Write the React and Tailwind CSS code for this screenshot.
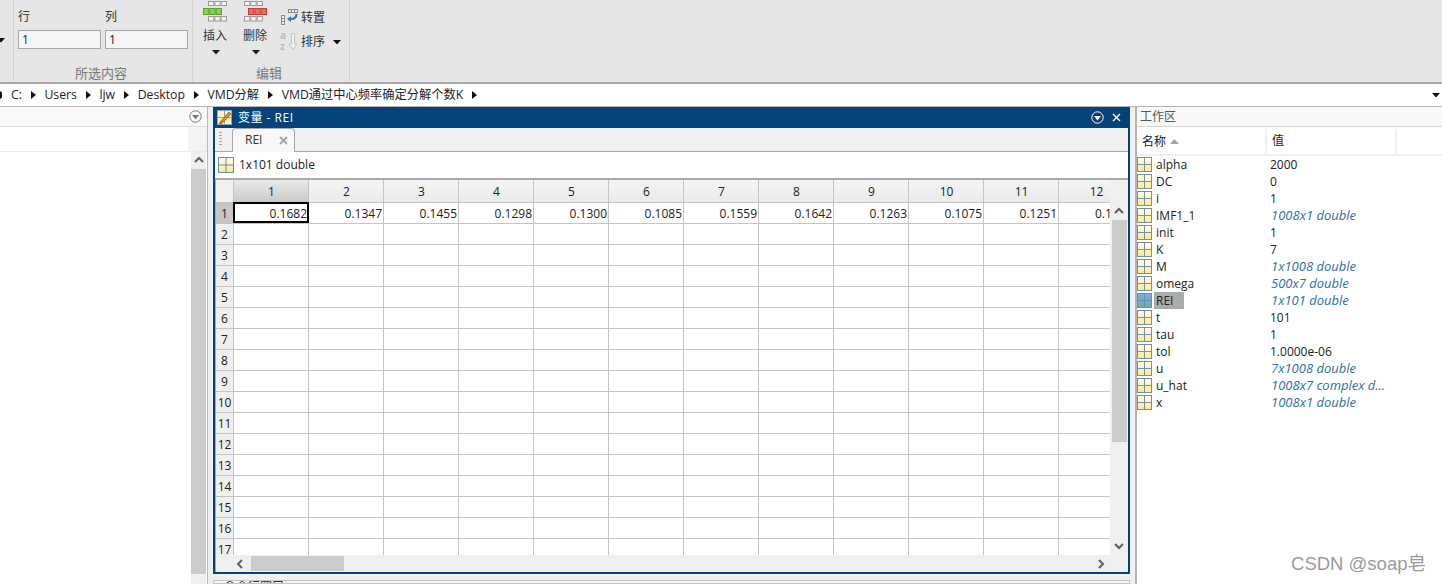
import React from "react";

const FONT = { fontFamily: '"Open Sans","Noto Sans CJK SC",sans-serif' };

function GridIcon({ blue, size = 15 }) {
  const id = blue ? "gb" : "gy";
  return (
    <svg width={size} height={size} viewBox="0 0 16 16" className="shrink-0">
      <defs>
        <linearGradient id={id} x1="0" y1="0" x2="0" y2="1">
          <stop offset="0" stopColor={blue ? "#6fb2e8" : "#fffef0"} />
          <stop offset="1" stopColor={blue ? "#6fa9a8" : "#fde98c"} />
        </linearGradient>
      </defs>
      <rect x="0.5" y="0.5" width="15" height="15" fill={`url(#${id})`} stroke="#6d8aa8" />
      <path d="M8 0.5V15.5M0.5 8H15.5" stroke="#6d8aa8" fill="none" />
    </svg>
  );
}

function Tri({ className = "" }) {
  return (
    <svg width="8" height="4.5" viewBox="0 0 9 5" className={`shrink-0 ${className}`}>
      <path d="M0 0H9L4.5 5Z" fill="#111" />
    </svg>
  );
}

function Crumb() {
  return (
    <svg width="5" height="8" viewBox="0 0 5 8" className="shrink-0">
      <path d="M0 0L5 4L0 8Z" fill="#111" />
    </svg>
  );
}

function Blocks({ color, stroke, outer, mid }) {
  const cells = [0, 1, 2];
  return (
    <svg width="28" height="23" viewBox="0 0 28 23">
      {cells.map((i) => <rect key={"a" + i} x={outer + i * 6.33 + 0.5} y="1.5" width="5.3" height="4" fill="#f4f4f4" stroke="#9a9a9a" />)}
      {cells.map((i) => <rect key={"m" + i} x={mid + i * 6.33 + 0.5} y="8.5" width="5.3" height="6" fill={color} stroke={stroke} />)}
      {cells.map((i) => <rect key={"b" + i} x={outer + i * 6.33 + 0.5} y="16.5" width="5.3" height="4.5" fill="#f4f4f4" stroke="#9a9a9a" />)}
    </svg>
  );
}

function InsertColumn({ label, color, stroke, outer, mid }) {
  return (
    <div className="flex w-[40px] flex-col items-center">
      <div className="h-[23px] overflow-hidden"><Blocks color={color} stroke={stroke} outer={outer} mid={mid} /></div>
      <div className="mt-[3px] text-[12px] leading-[20px] text-[#333]">{label}</div>
      <Tri className="ml-[2px] mt-[4px]" />
    </div>
  );
}

function Ribbon() {
  return (
    <div className="flex h-[84px] shrink-0 border-b-2 border-[#a8a8a8] bg-[#e6e6e6]">
      <div className="relative w-[14px] border-r border-[#d2d2d2]">
        <Tri className="absolute left-[-3px] top-[38px]" />
      </div>
      <div className="flex w-[179px] flex-col border-r border-[#d2d2d2] pl-[4px]">
        <div className="flex h-[31px] items-end pb-[5px] text-[12px] leading-[16px] text-[#333]">
          <span className="w-[87px]">行</span>
          <span>列</span>
        </div>
        <div className="flex gap-[4px]">
          {[0, 1].map((i) => (
            <div key={i} className="h-[19px] w-[83px] border border-[#a6a6a6] bg-[#f5f5f5] pl-[3px] text-[12px] leading-[18px] text-[#222]">1</div>
          ))}
        </div>
        <div className="mt-[15px] pr-[8px] text-center text-[13px] leading-[18px] text-[#777]">所选内容</div>
      </div>
      <div className="flex w-[157px] flex-col border-r border-[#d2d2d2]">
        <div className="flex h-[64px] pl-[2px]">
          <InsertColumn label="插入" color="#8fd14f" stroke="#5d9b2c" outer={7} mid={2} />
          <InsertColumn label="删除" color="#f26b63" stroke="#c23a33" outer={3} mid={7} />
          <div className="ml-[6px] flex flex-col pt-[7px] text-[12px] leading-[22px] text-[#333]">
            <div className="flex items-center">
              <svg width="20" height="18" viewBox="0 0 20 18" className="shrink-0">
                <rect x="0.5" y="6.5" width="3" height="3" fill="#f4f4f4" stroke="#888" />
                <rect x="0.5" y="9.5" width="3" height="3" fill="#f4f4f4" stroke="#888" />
                <rect x="0.5" y="12.5" width="3" height="3" fill="#f4f4f4" stroke="#888" />
                <rect x="7.5" y="0.5" width="3" height="3" fill="#f4f4f4" stroke="#888" />
                <rect x="10.5" y="0.5" width="3" height="3" fill="#f4f4f4" stroke="#888" />
                <rect x="13.5" y="0.5" width="3" height="3" fill="#f4f4f4" stroke="#888" />
                <path d="M15.5 5C15.5 9 13 10 9.5 10" stroke="#3b78b0" strokeWidth="2.2" fill="none" />
                <path d="M6 10L10 7V13Z" fill="#3b78b0" />
              </svg>
              <span>转置</span>
            </div>
            <div className="mt-[2px] flex items-center">
              <div className="relative h-[20px] w-[20px] shrink-0">
                <span className="absolute left-[-1px] top-[-2px] text-[10px] font-bold leading-[10px] text-[#bbb]">a</span>
                <span className="absolute left-[-1px] top-[9px] text-[10px] font-bold leading-[10px] text-[#bbb]">z</span>
                <svg width="10" height="18" viewBox="0 0 10 18" className="absolute left-[7px] top-[1px]">
                  <path d="M3.5 0.5H6.5V11H9L5 16.5L1 11H3.5Z" fill="#f2f2f2" stroke="#c4c4c4" />
                </svg>
              </div>
              <span>排序</span>
              <Tri className="ml-[8px]" />
            </div>
          </div>
        </div>
        <div className="mt-[1px] pr-[4px] text-center text-[13px] leading-[18px] text-[#777]">编辑</div>
      </div>
    </div>
  );
}

function AddressBar() {
  const parts = ["C:", "Users", "ljw", "Desktop", "VMD分解", "VMD通过中心频率确定分解个数K"];
  return (
    <div className="flex h-[23px] shrink-0 items-center border-b border-[#b4b4b4] bg-white pr-[2px] text-[12.25px] text-[#222]">
      <div className="flex flex-1 items-center gap-[8px]">
        <svg width="2" height="8" viewBox="0 0 2 8" className="shrink-0"><path d="M0 0L2 1.5V6.5L0 8Z" fill="#111" /></svg>
        <div className="flex items-center gap-[8.75px] pl-[1px]">
          {parts.map((p) => (
            <React.Fragment key={p}>
              <span>{p}</span>
              <Crumb />
            </React.Fragment>
          ))}
        </div>
      </div>
      <Tri />
    </div>
  );
}

function CircleDown({ light }) {
  const c = light ? "#fff" : "#777";
  return (
    <svg width="13" height="13" viewBox="0 0 13 13" className="shrink-0">
      <circle cx="6.5" cy="6.5" r="5.7" fill="none" stroke={c} />
      <path d="M3 5H10L6.5 9.5Z" fill={c} />
    </svg>
  );
}

function ScrollArrow({ dir }) {
  const paths = {
    up: "M1 6L5 2L9 6",
    down: "M1 2L5 6L9 2",
    left: "M6 1L2 5L6 9",
    right: "M2 1L6 5L2 9",
  };
  return (
    <svg width="10" height="10" viewBox="0 0 10 10" className="shrink-0">
      <path d={paths[dir]} stroke="#606060" strokeWidth="2" fill="none" />
    </svg>
  );
}

function LeftPanel() {
  return (
    <div className="flex w-[208px] shrink-0 flex-col border-r border-[#b9b9b9] bg-white">
      <div className="flex h-[20px] shrink-0 items-center justify-end border-b border-[#dcdcdc] bg-[#f9f9f9] pr-[5px]">
        <CircleDown />
      </div>
      <div className="flex h-[25px] shrink-0 border-b border-[#ececec]">
        <div className="flex-1" />
        <div className="w-[19px] bg-[#f3f3f3]" />
      </div>
      <div className="flex min-h-0 flex-1">
        <div className="flex-1" />
        <div className="flex w-[15px] flex-col bg-[#efefef]">
          <div className="flex h-[17px] shrink-0 items-center justify-center"><ScrollArrow dir="up" /></div>
          <div className="flex-1 bg-[#cbcbcb]" />
          <div className="h-[10px] shrink-0" />
        </div>
        <div className="w-[1px]" />
      </div>
    </div>
  );
}

const COLS = [
  ["1", "0.1682"], ["2", "0.1347"], ["3", "0.1455"], ["4", "0.1298"],
  ["5", "0.1300"], ["6", "0.1085"], ["7", "0.1559"], ["8", "0.1642"],
  ["9", "0.1263"], ["10", "0.1075"], ["11", "0.1251"], ["12", "0.1"],
];
const ROWS = Array.from({ length: 17 }, (_, i) => i + 1);

function Table() {
  return (
    <div className="flex min-h-0 flex-1 flex-col border-t-2 border-l border-[#a9a9a9] bg-[#efefef]">
      <div className="flex min-h-0 flex-1">
        <div className="min-w-0 flex-1 overflow-hidden bg-white">
          <div className="flex h-[22px] bg-[#f0f0f0] text-[12px] leading-[23px] text-[#222]">
            <div className="w-[18px] shrink-0 border-r border-[#c4c4c4]" />
            {COLS.map(([c], i) => (
              <div key={c} className={`w-[75px] shrink-0 border-r border-[#c4c4c4] pl-[1px] text-center ${i === 0 ? "bg-gradient-to-b from-[#e9e9e9] to-[#c9c9c9]" : "bg-gradient-to-b from-[#f5f5f5] to-[#eaeaea]"}`}>{c}</div>
            ))}
          </div>
          {ROWS.map((r) => (
            <div key={r} className="flex h-[21px] border-t border-[#c4c4c4] text-[12px] leading-[21px] text-[#222]">
              <div className={`w-[18px] shrink-0 border-r border-[#c4c4c4] text-center ${r === 1 ? "bg-[#c6c6c6]" : "bg-[#f0f0f0]"}`}>{r}</div>
              {COLS.map(([c, v], i) => (
                <div key={c} className={`relative w-[75px] shrink-0 border-r border-[#c4c4c4] ${i === 11 ? "pl-[36px] text-left" : "pr-[1px] text-right"}`}>
                  {r === 1 ? v : ""}
                  {r === 1 && i === 0 ? <div className="absolute -left-[1px] -right-[1px] -top-[1px] bottom-0 border-2 border-black" /> : null}
                </div>
              ))}
            </div>
          ))}
        </div>
        <div className="flex w-[18px] shrink-0 flex-col">
          <div className="flex h-[40px] shrink-0 items-end justify-center pb-[3px]"><ScrollArrow dir="up" /></div>
          <div className="h-[222px] w-[15px] self-center bg-[#cbcbcb]" />
          <div className="flex-1" />
          <div className="flex h-[17px] shrink-0 items-center justify-center"><ScrollArrow dir="down" /></div>
        </div>
      </div>
      <div className="flex h-[17px] shrink-0 items-center pr-[21px]">
        <div className="flex w-[35px] shrink-0 justify-end pr-[5px]"><ScrollArrow dir="left" /></div>
        <div className="h-[15px] w-[93px] bg-[#cbcbcb]" />
        <div className="flex-1" />
        <ScrollArrow dir="right" />
      </div>
    </div>
  );
}

function Editor() {
  return (
    <div className="flex min-w-0 flex-1 flex-col">
      <div className="flex h-[467px] shrink-0 flex-col border-[2px] border-[#03437a] bg-white">
        <div className="-mx-[2px] -mt-[2px] flex h-[21px] shrink-0 items-center bg-[#03437a] pl-[4px] pr-[9px] text-[12px] text-white">
          <svg width="15" height="15" viewBox="0 0 15 15" className="shrink-0">
            <rect x="0.5" y="0.5" width="14" height="14" fill="#fff5b8" stroke="#8aa5c0" />
            <path d="M7.5 0.5V14.5M0.5 7.5H14.5" stroke="#8aa5c0" />
            <path d="M3 12L12 2L14 4L5 13.5L2.5 14Z" fill="#d98a2b" stroke="#7a4a12" strokeWidth="0.6" />
          </svg>
          <span className="ml-[6px] flex-1 tracking-[0.5px]">变量 - REI</span>
          <CircleDown light />
          <svg width="9" height="9" viewBox="0 0 9 9" className="ml-[8px] shrink-0">
            <path d="M1 1L8 8M8 1L1 8" stroke="#fff" strokeWidth="1.4" />
          </svg>
        </div>
        <div className="flex h-[24px] shrink-0 items-end border-b border-[#a8a8a8] bg-[#f0f0f0] pl-[3px]">
          <svg width="6" height="17" viewBox="0 0 6 17" className="mb-[3px] mr-[8px] shrink-0">
            {[1, 4, 7, 10, 13].map((y) => <rect key={y} x="1" y={y} width="3" height="1" fill="#a8a8a8" />)}
          </svg>
          <div className="relative -mb-px flex h-[24px] w-[63px] items-center rounded-t-[4px] border border-b-0 border-[#a8a8a8] bg-[#f8f8f8] pb-[1px] pl-[12px] text-[12px] text-[#333]">
            <span>REI</span>
            <svg width="9" height="9" viewBox="0 0 9 9" className="ml-[17px] shrink-0">
              <path d="M1 1L8 8M8 1L1 8" stroke="#a8a8a8" strokeWidth="2" />
            </svg>
          </div>
        </div>
        <div className="flex h-[26px] shrink-0 items-center gap-[5px] bg-white pl-[3px] text-[12px] text-[#222]">
          <GridIcon size={16} />
          <span>1x101 double</span>
        </div>
        <Table />
      </div>
      <div className="mt-[6px] flex-1 overflow-hidden border border-[#c4c4c4] bg-[#f7f7f7] pl-[10px] text-[12px] leading-[12px] text-[#333]">
        命令行窗口
      </div>
    </div>
  );
}

const VARS = [
  ["alpha", "2000"], ["DC", "0"], ["i", "1"], ["IMF1_1", "1008x1 double", 1], ["init", "1"],
  ["K", "7"], ["M", "1x1008 double", 1], ["omega", "500x7 double", 1], ["REI", "1x101 double", 1, 1],
  ["t", "101"], ["tau", "1"], ["tol", "1.0000e-06"], ["u", "7x1008 double", 1],
  ["u_hat", "1008x7 complex d...", 1], ["x", "1008x1 double", 1],
];

function Workspace() {
  return (
    <div className="flex w-[307px] shrink-0 flex-col border-l-2 border-[#b4b4b4] bg-white">
      <div className="flex h-[20px] shrink-0 items-center border-b border-[#d4d4d4] bg-[#f8f8f8] pl-[3px] text-[12px] text-[#555]">工作区</div>
      <div className="flex h-[29px] shrink-0 border-b-2 border-[#efefef] pt-[2px] text-[12px] leading-[24px] text-[#222]">
        <div className="flex w-[130px] items-center gap-[4px] border-r-2 border-[#efefef] pl-[5px]">
          <span>名称</span>
          <svg width="9" height="5" viewBox="0 0 9 5"><path d="M0 5H9L4.5 0Z" fill="#aaa793" /></svg>
        </div>
        <div className="w-[130px] border-r-2 border-[#efefef] pl-[5px]">值</div>
      </div>
      <div className="text-[12px] text-[#222]">
        {VARS.map(([n, v, it, sel]) => (
          <div key={n} className="flex h-[17px] items-center leading-[17px]">
            <GridIcon blue={!!sel} />
            <span className="ml-[2px] w-[116px] shrink-0">
              <span className={`inline-block h-[17px] pl-[2px] ${sel ? "w-[30px] bg-[#ababab]" : ""}`}>{n}</span>
            </span>
            <span className={it ? "pl-[1px] text-[13px] italic text-[#2f6ea5]" : ""}>{v}</span>
          </div>
        ))}
      </div>
    </div>
  );
}

export default function App() {
  return (
    <div className="relative flex h-[584px] w-[1442px] flex-col overflow-hidden bg-white" style={FONT}>
      <Ribbon />
      <AddressBar />
      <div className="flex min-h-0 flex-1">
        <LeftPanel />
        <div className="flex min-w-0 flex-1 bg-[#f0f0f0] pl-[5px] pr-[5px]">
          <Editor />
        </div>
        <Workspace />
      </div>
      <div className="absolute bottom-[8px] right-[16px] font-['Liberation_Sans','Noto_Sans_CJK_SC',sans-serif] text-[18.5px] leading-[24px] text-[#9a9a9a]">CSDN @soap皂</div>
    </div>
  );
}
